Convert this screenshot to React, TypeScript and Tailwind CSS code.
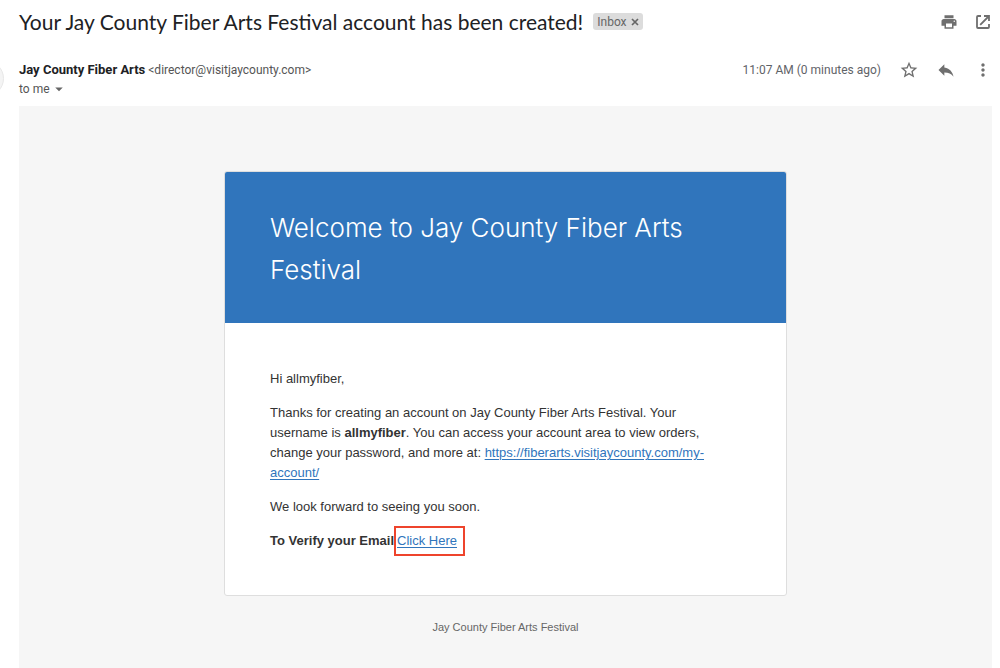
import React from 'react';
import { MdPrint, MdStarBorder, MdReply, MdMoreVert, MdArrowDropDown } from 'react-icons/md';

function IconButton({ label, children }: { label: string; children: React.ReactNode }) {
  return (
    <button type="button" aria-label={label} className="flex size-[18px] items-center justify-center text-[#6f6f6f]">
      {children}
    </button>
  );
}

function OpenInNewIcon() {
  return (
    <svg width="14" height="14" viewBox="0 0 14 14" fill="none" stroke="currentColor" strokeWidth="1.8">
      <path d="M5 1H2a1 1 0 0 0-1 1v10a1 1 0 0 0 1 1h10a1 1 0 0 0 1-1V9" />
      <path d="M8 1h5v5M13 1L4.2 9.8" />
    </svg>
  );
}

function SubjectBar() {
  return (
    <header className="flex h-[43px] items-center justify-between">
      <div className="flex items-center gap-[10px]">
        <h1 className="font-['Lato',sans-serif] text-[21px] leading-7 text-[#202124]">
          Your Jay County Fiber Arts Festival account has been created!
        </h1>
        <span className="flex h-[17px] items-center gap-1 rounded-[3px] bg-[#dcdcdc] px-1 text-[12px] leading-4 text-[#666]">
          Inbox
          <button type="button" aria-label="Remove label Inbox">
            <svg width="8" height="8" viewBox="0 0 8 8" fill="none" stroke="currentColor" strokeWidth="1.7">
              <path d="M1 1l6 6M7 1L1 7" />
            </svg>
          </button>
        </span>
      </div>
      <div className="flex items-center gap-4">
        <IconButton label="Print all"><MdPrint size={18} /></IconButton>
        <IconButton label="In new window"><OpenInNewIcon /></IconButton>
      </div>
    </header>
  );
}

function SenderRow() {
  return (
    <div className="relative flex justify-between pt-[17px] pb-[9px]">
      {/* Avatar, mostly off the left edge */}
      <div className="absolute top-[17px] -left-[52px] size-[37px] rounded-full border border-[#e8e8e8] bg-[#f4f4f4]" />
      <div>
        <p className="text-[12px] leading-5 text-[#555]">
          <strong className="text-[13px] leading-5 text-[#202124]">Jay County Fiber Arts</strong>{' '}
          &lt;director@visitjaycounty.com&gt;
        </p>
        <button type="button" className="flex h-[17px] items-center text-[12px] leading-4 text-[#555]">
          to me
          <MdArrowDropDown size={18} className="text-[#666]" />
        </button>
      </div>
      <div className="flex h-5 items-center gap-[19px]">
        <time className="text-[12px] leading-5 text-[#5f6368]">11:07 AM (0 minutes ago)</time>
        <IconButton label="Star"><MdStarBorder size={20} className="shrink-0" /></IconButton>
        <IconButton label="Reply"><MdReply size={20} className="shrink-0" /></IconButton>
        <IconButton label="More"><MdMoreVert size={20} className="shrink-0" /></IconButton>
      </div>
    </div>
  );
}

function EmailBody() {
  return (
    <section className="mr-2 grow bg-[#f6f6f6] px-4 pt-[65px] pb-8 font-['Liberation_Sans',Arial,sans-serif]">
      <div className="mx-auto max-w-[563px] overflow-hidden rounded-[3px] border border-[#dedede] bg-white">
        <div className="bg-[#3075bc] px-[45px] pt-[35px] pb-8">
          <h2 className="font-['Inter',sans-serif] text-[26px] leading-[42px] font-light text-white">
            Welcome to Jay County Fiber Arts Festival
          </h2>
        </div>
        <div className="flex flex-col gap-[14px] pt-[46px] pr-14 pb-11 pl-[45px] text-[13px] leading-5 text-[#333]">
          <p>Hi allmyfiber,</p>
          <p>
            Thanks for creating an account on Jay County Fiber Arts Festival. Your username is{' '}
            <strong>allmyfiber</strong>. You can access your account area to view orders, change your password, and
            more at:{' '}
            <a href="#my-account" className="text-[#3075bc] underline underline-offset-2">
              https://fiberarts.visitjaycounty.com/my-account/
            </a>
          </p>
          <p>We look forward to seeing you soon.</p>
          <p className="flex h-5 items-center">
            <strong>To Verify your Email</strong>
            <span className="border-2 border-[#ee442c] py-[3px] pr-[6px] pl-px">
              <a href="#verify" className="text-[#3075bc] underline underline-offset-2">Click Here</a>
            </span>
          </p>
        </div>
      </div>
      <p className="mt-[21px] text-center text-[11px] leading-5 text-[#666]">Jay County Fiber Arts Festival</p>
    </section>
  );
}

export default function App() {
  return (
    <main className="flex min-h-screen flex-col overflow-hidden bg-white pl-[19px] font-['Roboto',sans-serif]">
      <div className="pr-2">
        <SubjectBar />
        <SenderRow />
      </div>
      <EmailBody />
    </main>
  );
}
